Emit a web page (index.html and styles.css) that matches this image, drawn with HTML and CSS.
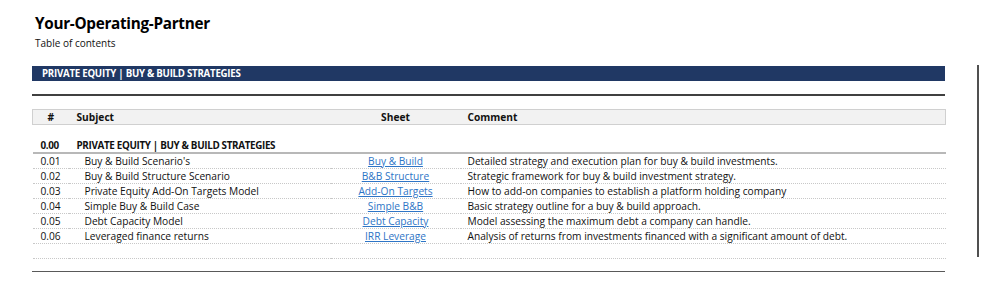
FILE: index.html
```html
<!DOCTYPE html>
<html>
<head>
<meta charset="utf-8">
<link rel="stylesheet" href="styles.css">
</head>
<body>
<div class="page">
  <div class="sheet">
    <h1 class="title">Your-Operating-Partner</h1>
    <div class="subtitle">Table of contents</div>
    <div class="bar">PRIVATE EQUITY | BUY &amp; BUILD STRATEGIES</div>
    <div class="rule"></div>
    <table class="toc">
      <colgroup>
        <col class="c-num"><col class="c-subj"><col class="c-sheet"><col class="c-comment">
      </colgroup>
      <tr class="head">
        <td class="num-h">#</td><td class="subj-h">Subject</td><td class="sheet-h">Sheet</td><td class="comment">Comment</td>
      </tr>
      <tr class="spacer"><td colspan="4"></td></tr>
      <tr class="section">
        <td class="num">0.00</td><td class="subj-h">PRIVATE EQUITY | BUY &amp; BUILD STRATEGIES</td><td></td><td></td>
      </tr>
      <tr class="item"><td class="num">0.01</td><td class="subj">Buy &amp; Build Scenario's</td><td class="link"><a href="#">Buy &amp; Build</a></td><td class="comment">Detailed strategy and execution plan for buy &amp; build investments.</td></tr>
      <tr class="item"><td class="num">0.02</td><td class="subj">Buy &amp; Build Structure Scenario</td><td class="link"><a href="#">B&amp;B Structure</a></td><td class="comment">Strategic framework for buy &amp; build investment strategy.</td></tr>
      <tr class="item"><td class="num">0.03</td><td class="subj">Private Equity Add-On Targets Model</td><td class="link"><a href="#">Add-On Targets</a></td><td class="comment">How to add-on companies to establish a platform holding company</td></tr>
      <tr class="item"><td class="num">0.04</td><td class="subj">Simple Buy &amp; Build Case</td><td class="link"><a href="#">Simple B&amp;B</a></td><td class="comment">Basic strategy outline for a buy &amp; build approach.</td></tr>
      <tr class="item"><td class="num">0.05</td><td class="subj">Debt Capacity Model</td><td class="link"><a href="#">Debt Capacity</a></td><td class="comment">Model assessing the maximum debt a company can handle.</td></tr>
      <tr class="item"><td class="num">0.06</td><td class="subj">Leveraged finance returns</td><td class="link"><a href="#">IRR Leverage</a></td><td class="comment">Analysis of returns from investments financed with a significant amount of debt.</td></tr>
      <tr class="item"><td colspan="4"></td></tr>
    </table>
    <div class="rule bottom"></div>
  </div>
  <div class="vline"></div>
</div>
</body>
</html>
```
FILE: styles.css
```css
html, body {
  margin: 0;
  padding: 0;
  background: #ffffff;
}
body {
  font-family: "Open Sans", "Liberation Sans", sans-serif;
  font-size: 10.2px;
  color: #111111;
}
.page {
  display: flex;
  align-items: flex-start;
  padding-left: 32px;
}
.sheet {
  width: 913px;
  padding-top: 13px;
}
.title {
  margin: 0 0 0 3px;
  font-size: 15.3px;
  font-weight: 700;
  line-height: 20px;
  color: #000;
  letter-spacing: -0.3px;
}
.subtitle {
  margin: 3px 0 0 3px;
  font-size: 10px;
  line-height: 14px;
}
.bar {
  margin-top: 16px;
  height: 15px;
  line-height: 15px;
  background: #203864;
  color: #ffffff;
  font-weight: 700;
  font-size: 9.7px;
  padding-left: 10px;
  letter-spacing: -0.25px;
}
.rule {
  margin-top: 13px;
  height: 1.5px;
  background: #404040;
}
.rule.bottom {
  margin-top: 12px;
  background: #595959;
}
.toc {
  margin-top: 13px;
  width: 913px;
  border-collapse: collapse;
  table-layout: fixed;
}
.c-num { width: 36px; }
.c-subj { width: 262px; }
.c-sheet { width: 130px; }
.c-comment { width: 485px; }
.toc td {
  padding: 0;
  height: 14px;
  line-height: 14px;
  white-space: nowrap;
  overflow: hidden;
}
.head td {
  background: #f2f2f2;
  border-top: 1px solid #d0d0d0;
  border-bottom: 1px solid #d0d0d0;
  font-weight: 700;
  height: 14px;
}
.head td:first-child { border-left: 1px solid #d0d0d0; }
.head td:last-child { border-right: 1px solid #d0d0d0; }
.num-h { text-align: center; }
.subj-h { padding-left: 8px !important; }
.sheet-h { text-align: center; }
.comment { padding-left: 7px !important; }
.spacer td { height: 13px; }
.section td {
  font-weight: 700;
  border-bottom: 2px solid #b8b8b8;
  height: 14px;
  font-size: 9.9px;
  letter-spacing: -0.35px;
}
.num { padding-left: 8px !important; }
.subj { padding-left: 16px !important; }
.link { text-align: center; }
.link a {
  color: #2e75c6;
  text-decoration: underline;
}
.item td {
  border-bottom: 1px dotted #c8c8c8;
  height: 14px;
}
.vline {
  width: 2px;
  height: 192px;
  margin-top: 65px;
  margin-left: 32px;
  background: #505050;
}
```
